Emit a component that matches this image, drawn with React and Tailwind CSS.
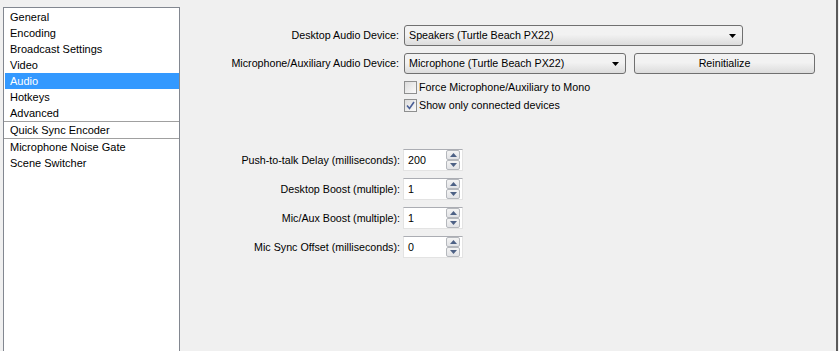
import React from 'react';

const SECTIONS = [
  ['General', 'Encoding', 'Broadcast Settings', 'Video', 'Audio', 'Hotkeys', 'Advanced'],
  ['Quick Sync Encoder'],
  ['Microphone Noise Gate', 'Scene Switcher'],
];

const SPINS = [
  ['Push-to-talk Delay (milliseconds):', '200'],
  ['Desktop Boost (multiple):', '1'],
  ['Mic/Aux Boost (multiple):', '1'],
  ['Mic Sync Offset (milliseconds):', '0'],
];

function Arrow() {
  return (
    <svg width="7" height="4" viewBox="0 0 7 4" className="shrink-0">
      <path d="M0 0H7L3.5 4Z" fill="#000" />
    </svg>
  );
}

function Combo({ value, width }) {
  return (
    <div
      className={`${width} h-[21px] flex items-center justify-between pl-[4px] pr-[6px] border border-[#707070] rounded-[3px] bg-gradient-to-b from-[#f2f2f2] from-45% to-[#dcdcdc]`}
    >
      <span>{value}</span>
      <Arrow />
    </div>
  );
}

function Check({ checked, label }) {
  return (
    <div className="flex items-center gap-[2px] h-[18px]">
      <span className="w-[13px] h-[13px] border border-[#8e8f8f] bg-gradient-to-br from-[#dcdcdc] to-[#fbfbfb] flex items-center justify-center">
        {checked && (
          <svg width="9" height="9" viewBox="0 0 9 9">
            <path d="M1 4.5L3.5 7.5L8 1" stroke="#4a5f97" strokeWidth="1.6" fill="none" />
          </svg>
        )}
      </span>
      <span>{label}</span>
    </div>
  );
}

function SpinArrow({ up }) {
  return (
    <div className="w-[14px] h-[10px] border border-[#b5b8bd] rounded-[2px] bg-gradient-to-b from-[#f4f4f4] to-[#e2e3e6] flex items-center justify-center">
      <svg width="7" height="4" viewBox="0 0 7 4">
        <path d={up ? 'M0 4H7L3.5 0Z' : 'M0 0H7L3.5 4Z'} fill="#4d6185" />
      </svg>
    </div>
  );
}

function Spin({ value }) {
  return (
    <div className="w-[60px] h-[22px] flex items-center justify-between pl-[4px] pr-[2px] bg-white border border-[#e3e3e3] border-t-[#abadb3]">
      <span>{value}</span>
      <div className="flex flex-col">
        <SpinArrow up />
        <SpinArrow />
      </div>
    </div>
  );
}

export default function App() {
  return (
    <div
      className="w-[839px] h-[351px] overflow-hidden bg-[#f0f0f0] flex text-[10.7px] text-black leading-none"
      style={{ fontFamily: 'Tahoma, "Liberation Sans", Arial, sans-serif' }}
    >
      <div className="ml-[3px] mt-[7px] w-[177px] h-[360px] bg-white border border-[#828790] pt-[1px] shrink-0 text-[11px]">
        {SECTIONS.map((group, gi) => (
          <div key={gi} className={gi > 0 ? 'border-t border-[#a0a0a0]' : ''}>
            {group.map((item) => (
              <div
                key={item}
                className={`h-[16px] flex items-center pl-[5px] ml-[1px] ${
                  item === 'Audio' ? 'bg-[#3399ff] text-white' : ''
                }`}
              >
                {item}
              </div>
            ))}
          </div>
        ))}
      </div>

      <div className="flex-1 flex flex-col pt-[25px]">
        <div className="flex flex-col gap-[7px]">
          <div className="flex items-center">
            <span className="w-[224px] text-right pr-[5px]">Desktop Audio Device:</span>
            <Combo value="Speakers (Turtle Beach PX22)" width="w-[339px]" />
          </div>
          <div className="flex items-center">
            <span className="w-[224px] text-right pr-[5px]">Microphone/Auxiliary Audio Device:</span>
            <Combo value="Microphone (Turtle Beach PX22)" width="w-[222px]" />
            <button className="ml-[8px] w-[181px] h-[21px] border border-[#707070] rounded-[3px] bg-gradient-to-b from-[#f2f2f2] from-45% to-[#dcdcdc]">
              Reinitialize
            </button>
          </div>
        </div>
        <div className="pl-[224px] mt-[4px] flex flex-col">
          <Check label="Force Microphone/Auxiliary to Mono" />
          <Check checked label="Show only connected devices" />
        </div>

        <div className="mt-[35px] flex flex-col gap-[7px]">
          {SPINS.map(([label, value]) => (
            <div key={label} className="flex items-center">
              <span className="w-[223px] text-right pr-[3px]">{label}</span>
              <Spin value={value} />
            </div>
          ))}
        </div>
      </div>

      <div className="w-[2px] h-full bg-[#5a5a5a] mr-[1px] shrink-0" />
    </div>
  );
}
